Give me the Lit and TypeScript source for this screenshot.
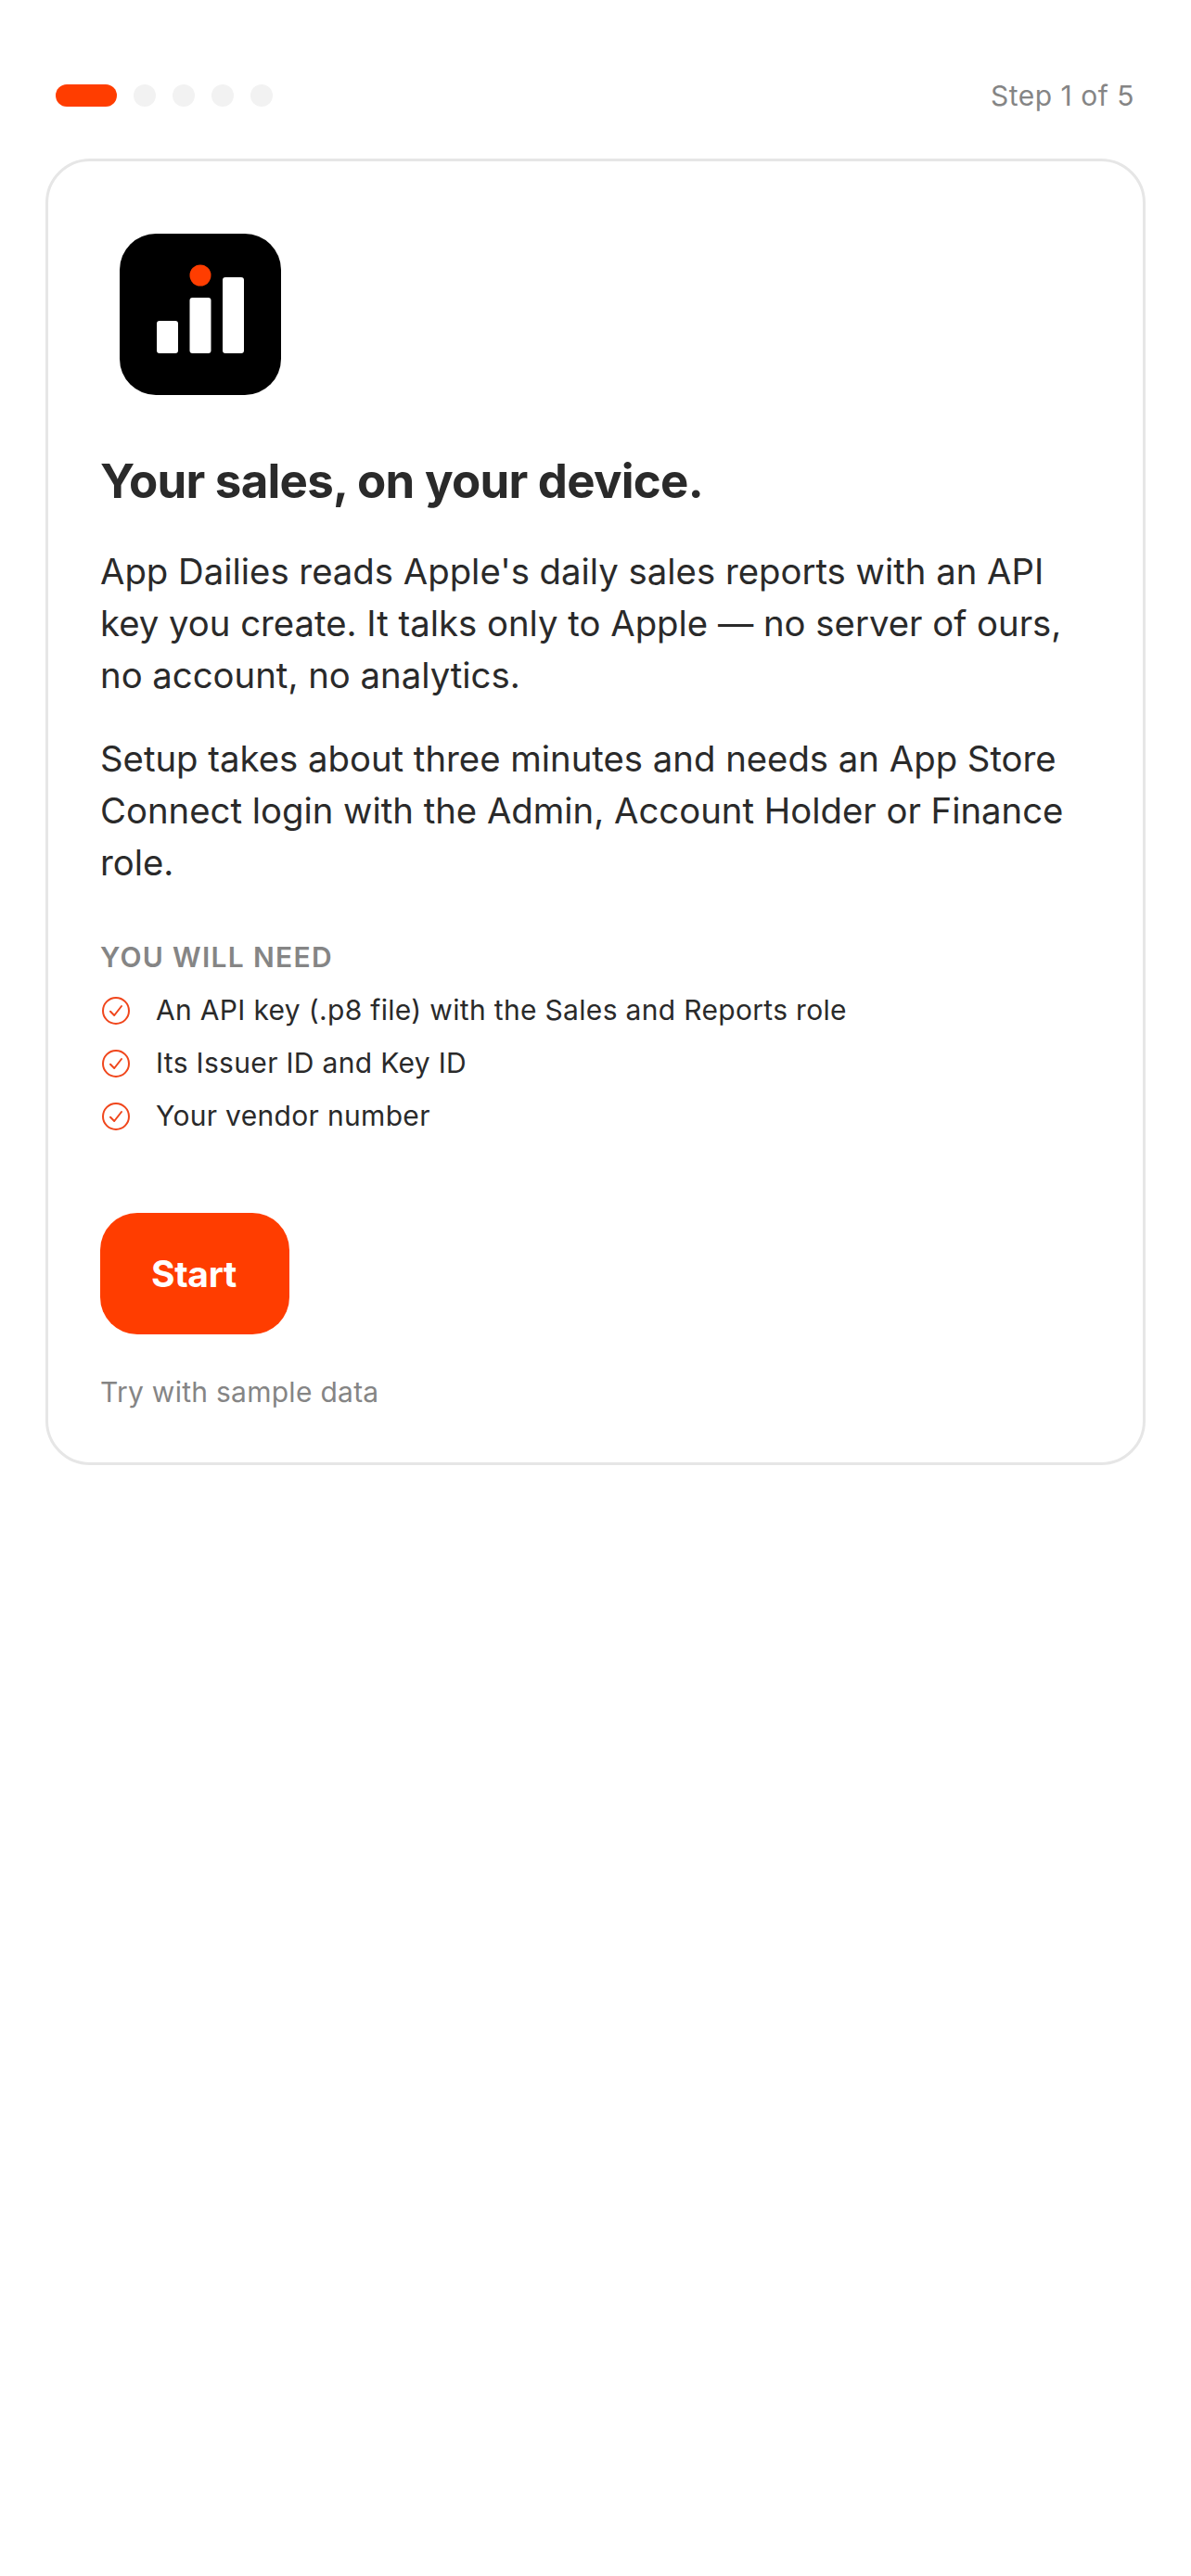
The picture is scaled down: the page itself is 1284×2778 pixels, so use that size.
import { LitElement, html, css, svg } from 'lit'
import { customElement } from 'lit/decorators.js'

const needs = [
  'An API key (.p8 file) with the Sales and Reports role',
  'Its Issuer ID and Key ID',
  'Your vendor number',
]

const check = svg`<svg class="check" viewBox="0 0 30 30" fill="none" stroke="#f0461c">
  <circle cx="15" cy="15" r="14" stroke-width="2"/>
  <path d="M9 15.8l4.2 4.2 7.8-10" stroke-width="2" stroke-linecap="round" stroke-linejoin="round"/>
</svg>`

@customElement('app-root')
export class AppRoot extends LitElement {
  static styles = css`
  :host {
    display: block;
    min-height: 2778px;
    background: #fff;
    font-family: Inter, 'Liberation Sans', sans-serif;
    color: #2a2a2a;
  }
  .progress {
    display: flex;
    align-items: center;
    justify-content: space-between;
    padding: 91px 61px 0 60px;
    height: 24px;
  }
  .dots {
    display: flex;
    gap: 18px;
  }
  .dots span {
    width: 24px;
    height: 24px;
    border-radius: 12px;
    background: #f2f2f2;
  }
  .dots span.active {
    width: 66px;
    background: #ff3d00;
  }
  .step {
    font-size: 30px;
    letter-spacing: 0.5px;
    color: #858585;
  }
  .card {
    margin: 56px 49px 0;
    padding: 78px 56px 56px;
    border: 3px solid #e6e6e6;
    border-radius: 48px;
  }
  .logo {
    display: block;
    margin-left: 21px;
    width: 174px;
    height: 174px;
  }
  h1 {
    margin: 62px 0 0;
    font-size: 51px;
    line-height: 62px;
    font-weight: 700;
    letter-spacing: -0.75px;
  }
  p {
    margin: 34px 0 0;
    font-size: 38.3px;
    line-height: 56px;
  }
  h1 + p {
    margin-top: 38px;
  }
  .label {
    margin-top: 54px;
    font-size: 30px;
    line-height: 40px;
    font-weight: 600;
    letter-spacing: 1.3px;
    color: #858585;
  }
  ul {
    list-style: none;
    margin: 17px 0 0;
    padding: 0;
    display: flex;
    flex-direction: column;
    gap: 16px;
  }
  li {
    display: flex;
    align-items: center;
    gap: 28px;
    font-size: 30px;
    line-height: 41px;
    letter-spacing: 0.32px;
  }
  .check {
    width: 30px;
    height: 30px;
    margin-left: 2px;
    flex: none;
  }
  .start {
    display: block;
    margin-top: 84px;
    width: 204px;
    height: 131px;
    border: none;
    border-radius: 40px;
    background: #ff3d00;
    color: #fff;
    font: 700 39px Inter, 'Liberation Sans', sans-serif;
    letter-spacing: -0.3px;
    padding: 0 2px 0 0;
  }
  .sample {
    margin-top: 42px;
    font-size: 30px;
    line-height: 40px;
    letter-spacing: 0.27px;
    color: #858585;
  }
  `

  render() {
    return html`
    <div class="progress">
      <div class="dots">
        <span class="active"></span><span></span><span></span><span></span><span></span>
      </div>
      <div class="step">Step 1 of 5</div>
    </div>
    <div class="card">
      <svg class="logo" viewBox="0 0 174 174">
        <rect width="174" height="174" rx="39" fill="#000"/>
        <rect x="40" y="94" width="23" height="35" rx="3" fill="#fff"/>
        <rect x="75.5" y="69" width="23" height="60" rx="3" fill="#fff"/>
        <rect x="111" y="47" width="23" height="82" rx="3" fill="#fff"/>
        <circle cx="87" cy="45" r="11.5" fill="#ff3d00"/>
      </svg>
      <h1>Your sales, on your device.</h1>
      <p>App Dailies reads Apple's daily sales reports with an API key you create. It talks only to Apple — no server of ours, no account, no analytics.</p>
      <p>Setup takes about three minutes and needs an App Store Connect login with the Admin, Account Holder or Finance role.</p>
      <div class="label">YOU WILL NEED</div>
      <ul>
        ${needs.map((n) => html`<li>${check}<span>${n}</span></li>`)}
      </ul>
      <button class="start">Start</button>
      <div class="sample">Try with sample data</div>
    </div>
    `
  }
}
